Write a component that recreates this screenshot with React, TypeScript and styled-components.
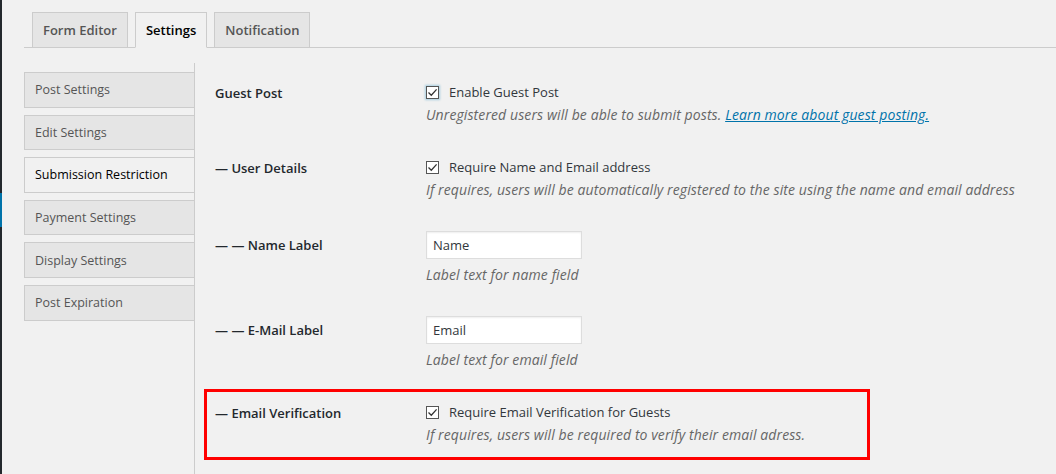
import React from "react";
import styled, { createGlobalStyle } from "styled-components";

const Global = createGlobalStyle`
  html, body { margin: 0; padding: 0; background: #f1f1f1; }
  body { font-family: "Open Sans", "Noto Sans", sans-serif; color: #23282d; }
  * { box-sizing: border-box; }
`;

const Page = styled.div`
  display: flex;
  min-height: 474px;
  background: #f1f1f1;
`;

const AdminEdge = styled.div`
  width: 2px;
  flex: none;
  background: #23282d;
  display: flex;
  flex-direction: column;
`;

const AdminCurrent = styled.div`
  margin-top: 193px;
  height: 34px;
  background: #0073aa;
`;

const Main = styled.div`
  flex: 1;
  padding-left: 22px;
  min-width: 0;
`;

const TabBar = styled.nav`
  display: flex;
  gap: 7px;
  padding: 12px 0 0 8px;
  border-bottom: 1px solid #ccc;
`;

const Tab = styled.div<{ $active?: boolean }>`
  height: 36px;
  margin-bottom: -1px;
  padding: 0 10px;
  display: flex;
  align-items: center;
  font-size: 13px;
  font-weight: 600;
  color: ${(p) => (p.$active ? "#000" : "#555")};
  background: ${(p) => (p.$active ? "#f1f1f1" : "#e5e5e5")};
  border: 1px solid #ccc;
  border-bottom-color: ${(p) => (p.$active ? "#f1f1f1" : "#ccc")};
`;

const Body = styled.div`
  display: flex;
  align-items: flex-start;
`;

const Sidebar = styled.ul`
  width: 171px;
  flex: none;
  margin: 15px 0 0;
  padding: 9px 0 0;
  list-style: none;
  border-right: 1px solid #ccc;
  min-height: 411px;
`;

const SideItem = styled.li<{ $active?: boolean }>`
  height: 35.6px;
  margin-bottom: 7px;
  padding: 0 10px;
  display: flex;
  align-items: center;
  font-size: 12.5px;
  color: ${(p) => (p.$active ? "#000" : "#555")};
  background: ${(p) => (p.$active ? "#f1f1f1" : "#e5e5e5")};
  border: 1px solid #ccc;
  border-right: none;
`;

const Content = styled.div`
  flex: 1;
  padding: 18px 0 0 20px;
`;

const Row = styled.div<{ $padTop: number; $highlight?: boolean }>`
  position: relative;
  display: grid;
  grid-template-columns: 211px 1fr;
  padding: ${(p) => p.$padTop}px 0 16px;

  ${(p) =>
    p.$highlight &&
    `
    &::after {
      content: "";
      position: absolute;
      left: -11px;
      top: 3px;
      bottom: 1px;
      width: 660px;
      border: 3px solid #f00;
      pointer-events: none;
    }
  `}
`;

const Label = styled.div<{ $offset: number }>`
  margin-top: ${(p) => p.$offset}px;
  font-size: 13px;
  line-height: 20px;
  font-weight: 600;
  color: #23282d;
`;

const Field = styled.div`
  display: flex;
  flex-direction: column;
  align-items: flex-start;
`;

const CheckLine = styled.label`
  display: flex;
  align-items: center;
  gap: 10px;
  font-size: 13px;
  line-height: 20px;
  color: #32373c;
`;

const Box = styled.span<{ $focus?: boolean }>`
  width: 13px;
  height: 13px;
  flex: none;
  border: 1px solid #555;
  background: #fff;
  display: flex;
  align-items: center;
  justify-content: center;
  box-shadow: ${(p) => (p.$focus ? "0 0 2px 1px rgba(30,140,190,0.35)" : "none")};
`;

const Description = styled.p<{ $gap: number }>`
  margin: ${(p) => p.$gap}px 0 0;
  font-size: 14px;
  letter-spacing: 0.1px;
  line-height: 20px;
  font-style: italic;
  color: #666;
`;

const Link = styled.a`
  color: #0073aa;
  text-decoration: underline;
`;

const TextInput = styled.input`
  width: 156px;
  height: 28px;
  padding: 0 6px;
  border: 1px solid #ddd;
  background: #fff;
  box-shadow: inset 0 1px 2px rgba(0, 0, 0, 0.07);
  font-family: inherit;
  font-size: 13px;
  color: #32373c;
  outline: none;
`;

const Check = () => (
  <svg width="11" height="11" viewBox="0 0 11 11">
    <path d="M1.5 5.5 L4.3 8.3 L9.6 2.4" fill="none" stroke="#333" strokeWidth="1.3" />
  </svg>
);

const CheckRow = ({
  label,
  text,
  focus,
  children,
  highlight,
}: {
  label: string;
  text: string;
  focus?: boolean;
  children: React.ReactNode;
  highlight?: boolean;
}) => (
  <Row $padTop={16} $highlight={highlight}>
    <Label $offset={1}>{label}</Label>
    <Field>
      <CheckLine>
        <Box $focus={focus}>
          <Check />
        </Box>
        {text}
      </CheckLine>
      <Description $gap={3}>{children}</Description>
    </Field>
  </Row>
);

const InputRow = ({ label, value, help }: { label: string; value: string; help: string }) => (
  <Row $padTop={15}>
    <Label $offset={4}>{label}</Label>
    <Field>
      <TextInput defaultValue={value} />
      <Description $gap={6}>{help}</Description>
    </Field>
  </Row>
);

const sideItems = [
  "Post Settings",
  "Edit Settings",
  "Submission Restriction",
  "Payment Settings",
  "Display Settings",
  "Post Expiration",
];

export default function App() {
  return (
    <>
      <Global />
      <Page>
        <AdminEdge>
          <AdminCurrent />
        </AdminEdge>
        <Main>
          <TabBar>
            <Tab>Form Editor</Tab>
            <Tab $active>Settings</Tab>
            <Tab>Notification</Tab>
          </TabBar>
          <Body>
            <Sidebar>
              {sideItems.map((s) => (
                <SideItem key={s} $active={s === "Submission Restriction"}>
                  {s}
                </SideItem>
              ))}
            </Sidebar>
            <Content>
              <CheckRow label="Guest Post" text="Enable Guest Post" focus>
                Unregistered users will be able to submit posts.{" "}
                <Link href="#">Learn more about guest posting.</Link>
              </CheckRow>
              <CheckRow label="— User Details" text="Require Name and Email address">
                If requires, users will be automatically registered to the site using the name and email address
              </CheckRow>
              <InputRow label="— — Name Label" value="Name" help="Label text for name field" />
              <InputRow label="— — E-Mail Label" value="Email" help="Label text for email field" />
              <CheckRow
                label="— Email Verification"
                text="Require Email Verification for Guests"
                highlight
              >
                If requires, users will be required to verify their email adress.
              </CheckRow>
            </Content>
          </Body>
        </Main>
      </Page>
    </>
  );
}
